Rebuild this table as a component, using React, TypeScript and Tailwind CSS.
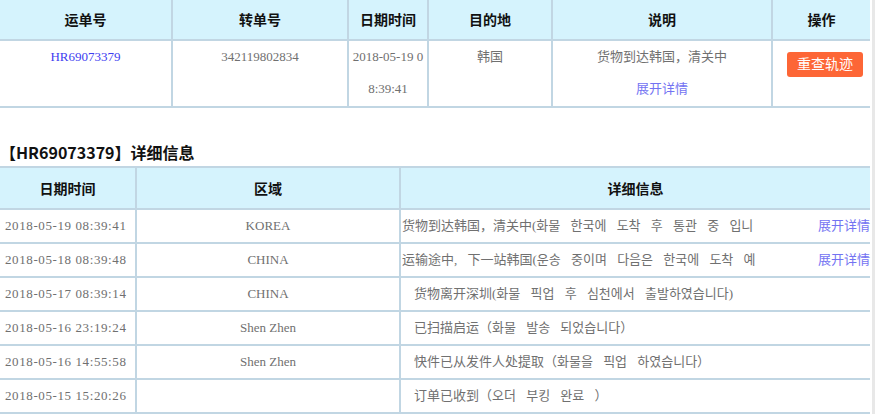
import React from "react";

const serif = '"Liberation Serif", "Noto Sans CJK SC", "Noto Sans CJK KR", serif';
const sans = '"Noto Sans CJK SC", "Noto Sans CJK KR", sans-serif';

const B = "border-[#c1d6e3]";

const topHead = ["运单号", "转单号", "日期时间", "目的地", "说明", "操作"];

const rows: { date: string; region: string; detail: string; expand?: boolean }[] = [
  { date: "2018-05-19 08:39:41", region: "KOREA", detail: "货物到达韩国，清关中(화물 한국에 도착 후 통관 중 입니", expand: true },
  { date: "2018-05-18 08:39:48", region: "CHINA", detail: "运输途中, 下一站韩国(운송 중이며 다음은 한국에 도착 예", expand: true },
  { date: "2018-05-17 08:39:14", region: "CHINA", detail: "货物离开深圳(화물 픽업 후 심천에서 출발하였습니다)" },
  { date: "2018-05-16 23:19:24", region: "Shen Zhen", detail: "已扫描启运（화물 발송 되었습니다）" },
  { date: "2018-05-16 14:55:58", region: "Shen Zhen", detail: "快件已从发件人处提取（화물을 픽업 하였습니다）" },
  { date: "2018-05-15 15:20:26", region: "", detail: "订单已收到（오더 부킹 완료 ）" },
];

export default function App() {
  return (
    <div className="flex h-[414px] w-[875px] overflow-hidden bg-white">
      <div className="w-[870px] shrink-0">
        {/* top table */}
        <div className="grid grid-cols-[173px_176px_80px_124px_220px_97px]" style={{ fontFamily: sans }}>
          {topHead.map((h, i) => (
            <div
              key={h}
              className={`flex h-[41px] items-center justify-center border-b-2 ${i < 5 ? "border-r-2" : ""} ${B} bg-[#d5f3fd] text-[14px] font-bold text-[#111]`}
            >
              {h}
            </div>
          ))}
        </div>
        <div
          className="grid h-[67px] grid-cols-[173px_176px_80px_124px_220px_97px] text-[13px] leading-[32px] text-[#707070]"
          style={{ fontFamily: serif }}
        >
          <div className={`border-r-2 border-b-2 ${B} text-center text-[#3d3df0]`}>HR69073379</div>
          <div className={`border-r-2 border-b-2 ${B} text-center`}>342119802834</div>
          <div className={`border-r-2 border-b-2 ${B} flex flex-col items-center`}>
            <span className="whitespace-nowrap">2018-05-19 0</span>
            <span>8:39:41</span>
          </div>
          <div className={`border-r-2 border-b-2 ${B} text-center`}>韩国</div>
          <div className={`border-r-2 border-b-2 ${B} flex flex-col items-center`}>
            <span>货物到达韩国，清关中</span>
            <span className="text-[#7373f2]">展开详情</span>
          </div>
          <div className={`border-b-2 ${B} pl-[14px] pt-[11px]`}>
            <button
              className="flex h-[25px] w-[76px] items-center justify-center rounded-[3px] bg-[#fd6636] text-[14px] leading-none text-white"
              style={{ fontFamily: serif }}
            >
              重查轨迹
            </button>
          </div>
        </div>

        {/* title */}
        <div
          className="mt-[33px] h-[22px] text-[16px] font-bold leading-[22px] text-[#111]"
          style={{ fontFamily: sans }}
        >
          【HR69073379】详细信息
        </div>

        {/* detail table */}
        <div className={`mt-[3px] grid grid-cols-[137px_264px_469px] border-t-2 ${B}`} style={{ fontFamily: sans }}>
          {["日期时间", "区域", "详细信息"].map((h, i) => (
            <div
              key={h}
              className={`flex h-[42px] items-center justify-center border-b-2 ${i < 2 ? "border-r-2" : ""} ${B} bg-[#d5f3fd] text-[14px] font-bold text-[#111]`}
            >
              {h}
            </div>
          ))}
        </div>
        <div style={{ fontFamily: serif }} className="text-[13px] text-[#707070]">
          {rows.map((r) => (
            <div key={r.date} className="grid h-[34px] grid-cols-[137px_264px_469px]">
              <div className={`flex items-center border-r-2 border-b-2 ${B} pl-[5px] tracking-[0.6px] whitespace-nowrap`}>
                {r.date}
              </div>
              <div className={`flex items-center justify-center border-r-2 border-b-2 ${B}`}>{r.region}</div>
              <div className={`flex items-center border-b-2 ${B}`}>
                {r.expand ? (
                  <>
                    <span className="whitespace-nowrap pl-[1px] [word-spacing:7px]">{r.detail}</span>
                    <span className="ml-auto whitespace-nowrap text-[#7373f2]">展开详情</span>
                  </>
                ) : (
                  <span className="whitespace-nowrap pl-[13px] [word-spacing:7px]">{r.detail}</span>
                )}
              </div>
            </div>
          ))}
        </div>
      </div>
      <div className="w-[2px] shrink-0" />
      <div className="w-[3px] shrink-0 bg-[#e8e8e8]" />
    </div>
  );
}
